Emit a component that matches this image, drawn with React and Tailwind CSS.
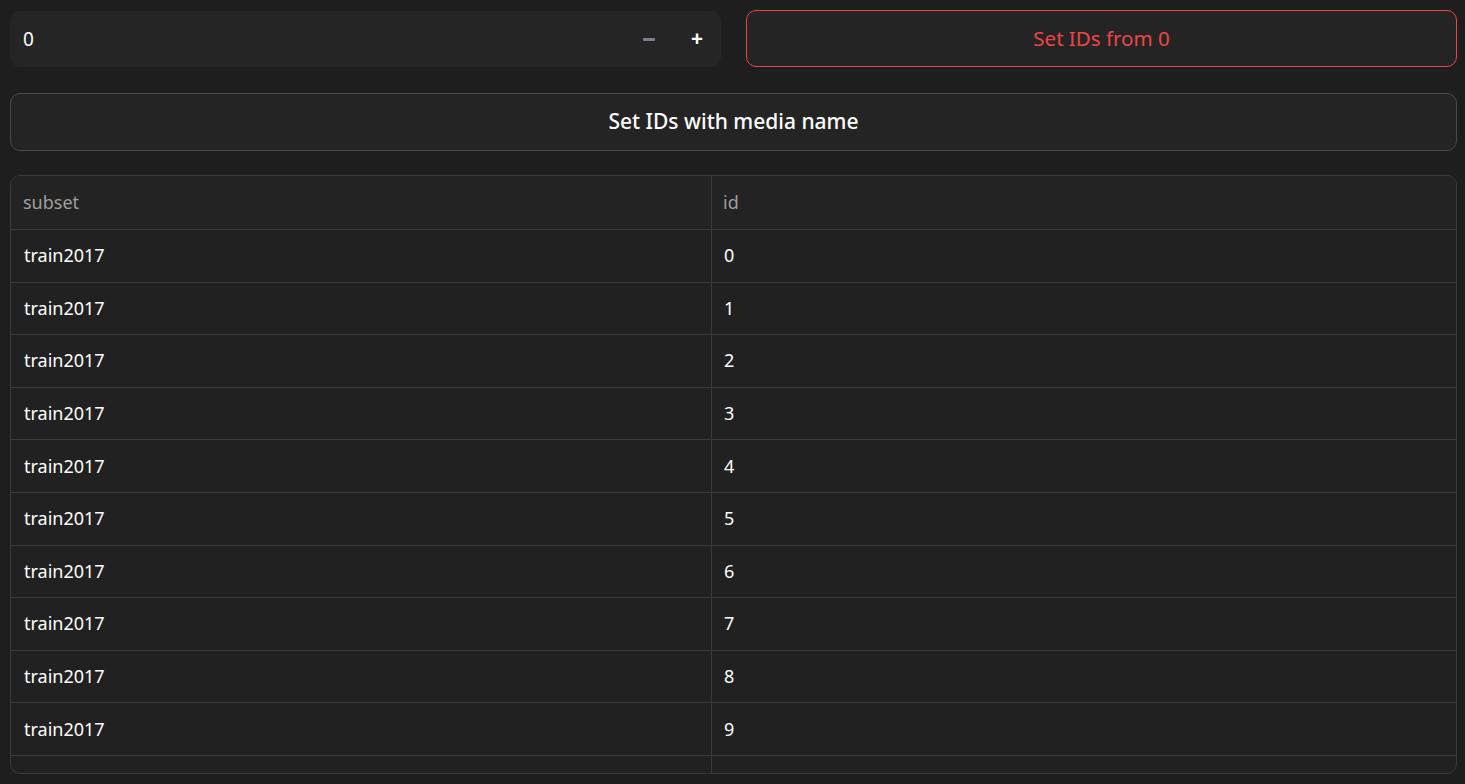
import React from 'react';

const rows = Array.from({ length: 11 }, (_, i) => ({ subset: 'train2017', id: i }));

export default function App() {
  return (
    <div
      className="h-[784px] w-full overflow-hidden bg-[#1e1e1e] pt-[10px] pl-[10px] pr-[8px] pb-[10px] flex flex-col text-white"
      style={{ fontFamily: '"Noto Sans", "Open Sans", sans-serif' }}
    >
      <div className="flex gap-[25px] h-[57px]">
        <div className="w-[711px] shrink-0 mt-[1px] h-[56px] rounded-[10px] bg-[#252525] flex items-center pl-[13px] pr-[17px]">
          <span className="text-[19px] flex-1">0</span>
          <span className="block w-[12px] h-[3px] bg-[#7d7f8c] rounded-[1px]"></span>
          <span className="text-[21px] font-bold text-white w-[14px] text-center ml-[35px]">+</span>
        </div>
        <button className="flex-1 h-[57px] rounded-[10px] border border-[#ef4444] bg-[#242424] text-[#ef4444] text-[20.5px]">
          Set IDs from 0
        </button>
      </div>

      <button className="mt-[26px] h-[58px] w-full rounded-[10px] border border-[#4a4a4a] bg-[#242424] text-[21px] font-medium text-white">
        Set IDs with media name
      </button>

      <div className="mt-[24px] flex-1 rounded-[10px] border border-[#3a3a3a] bg-[#212121] overflow-hidden">
        <div className="grid grid-cols-[701px_1fr] h-[54px] bg-[#232323] border-b border-[#3a3a3a] text-[18px] text-[#9e9e9e]">
          <div className="flex items-center pl-[12px] border-r border-[#3a3a3a]">subset</div>
          <div className="flex items-center pl-[11px]">id</div>
        </div>
        {rows.map((r) => (
          <div
            key={r.id}
            className="grid grid-cols-[701px_1fr] h-[52.6px] border-b border-[#3a3a3a] text-[18px] text-white"
          >
            <div className="flex items-center pl-[13px] border-r border-[#3a3a3a]">{r.subset}</div>
            <div className="flex items-center pl-[12px]">{r.id}</div>
          </div>
        ))}
      </div>
    </div>
  );
}
